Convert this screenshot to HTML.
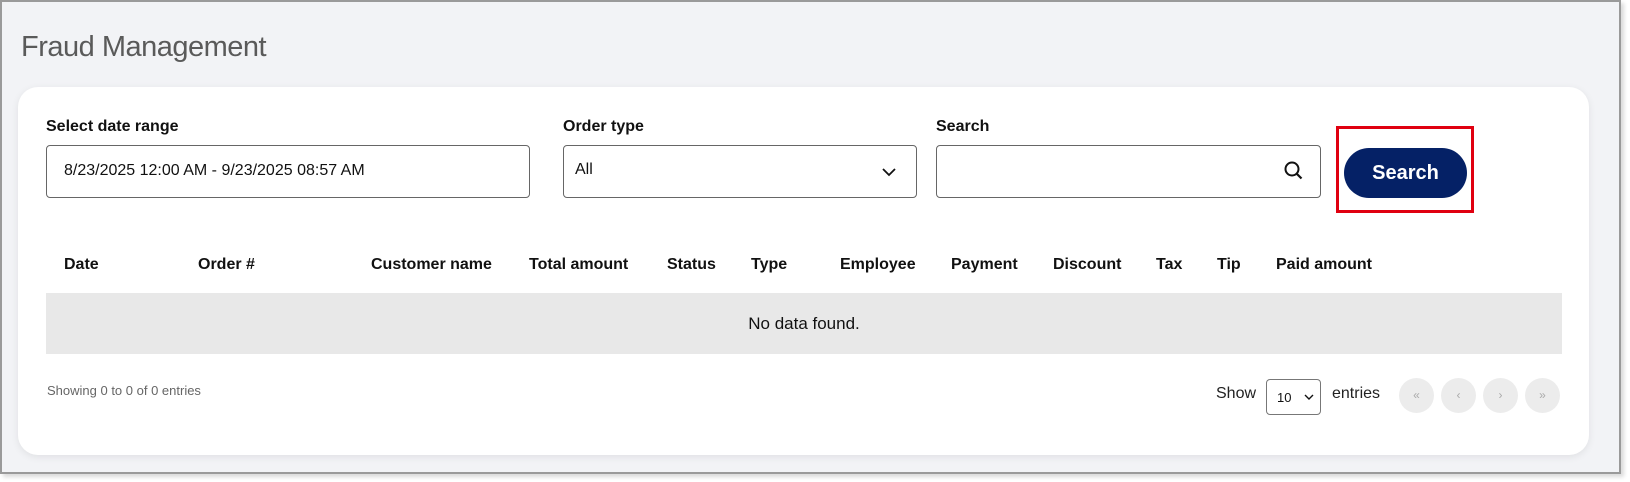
<!DOCTYPE html>
<html><head><meta charset="utf-8"><style>
*{box-sizing:border-box;margin:0;padding:0}
body{width:1630px;height:482px;background:#fff;font-family:"Liberation Sans",Arial,sans-serif;position:relative;overflow:hidden}
.frame{position:absolute;left:0;top:0;width:1621px;height:474px;border:2px solid #9a9a9a;background:#f2f3f6;box-shadow:3px 3px 4px rgba(0,0,0,.15)}
.abs{position:absolute}
.title{left:21px;top:31px;font-size:29px;color:#5a5a5a;letter-spacing:-0.5px}
.card{left:18px;top:87px;width:1571px;height:368px;background:#fff;border-radius:20px;box-shadow:0 2px 8px rgba(0,0,0,.08)}
.lbl{font-size:16px;font-weight:bold;color:#111}
.inp{border:1px solid #666;border-radius:4px;height:53px;top:145px;background:#fff}
.th{top:256px;font-size:16px;font-weight:bold;color:#111}
.pg{width:35px;height:35px;border-radius:50%;background:#ececec;color:#aaa;font-size:12px;text-align:center;line-height:35px;top:378px}
</style></head><body>
<div class="frame"></div>
<div class="abs title">Fraud Management</div>
<div class="abs card"></div>
<div class="abs lbl" style="left:46px;top:118px">Select date range</div>
<div class="abs lbl" style="left:563px;top:118px">Order type</div>
<div class="abs lbl" style="left:936px;top:118px">Search</div>
<div class="abs inp" style="left:46px;width:484px"></div>
<div class="abs" style="left:64px;top:162px;font-size:16px;color:#111">8/23/2025 12:00 AM - 9/23/2025 08:57 AM</div>
<div class="abs inp" style="left:563px;width:354px"></div>
<div class="abs" style="left:575px;top:161px;font-size:16px;color:#111">All</div>
<svg class="abs" style="left:881px;top:166px" width="16" height="12" viewBox="0 0 16 12"><path d="M2 3l6 6 6-6" fill="none" stroke="#111" stroke-width="1.8"/></svg>
<div class="abs inp" style="left:936px;width:385px"></div>
<svg class="abs" style="left:1283px;top:160px" width="22" height="22" viewBox="0 0 22 22"><circle cx="9" cy="9" r="6.5" fill="none" stroke="#111" stroke-width="2"/><path d="M13.5 13.5l5 5" stroke="#111" stroke-width="2.2"/></svg>
<div class="abs" style="left:1336px;top:126px;width:138px;height:87px;border:3px solid #e00010"></div>
<div class="abs" style="left:1344px;top:148px;width:123px;height:50px;border-radius:25px;background:#052166;color:#fff;font-weight:bold;font-size:20px;text-align:center;line-height:50px">Search</div>
<div class="abs th" style="left:64px">Date</div>
<div class="abs th" style="left:198px">Order #</div>
<div class="abs th" style="left:371px">Customer name</div>
<div class="abs th" style="left:529px">Total amount</div>
<div class="abs th" style="left:667px">Status</div>
<div class="abs th" style="left:751px">Type</div>
<div class="abs th" style="left:840px">Employee</div>
<div class="abs th" style="left:951px">Payment</div>
<div class="abs th" style="left:1053px">Discount</div>
<div class="abs th" style="left:1156px">Tax</div>
<div class="abs th" style="left:1217px">Tip</div>
<div class="abs th" style="left:1276px">Paid amount</div>
<div class="abs" style="left:46px;top:293px;width:1516px;height:61px;background:#e8e8e8;text-align:center;line-height:61px;font-size:17px;color:#111">No data found.</div>
<div class="abs" style="left:47px;top:383px;font-size:13px;color:#666">Showing 0 to 0 of 0 entries</div>
<div class="abs" style="left:1216px;top:385px;font-size:16px;color:#222">Show</div>
<div class="abs" style="left:1266px;top:379px;width:55px;height:36px;border:1px solid #777;border-radius:4px;background:#fff"></div>
<div class="abs" style="left:1277px;top:390px;font-size:13px;color:#111">10</div>
<svg class="abs" style="left:1304px;top:393px" width="10" height="8" viewBox="0 0 10 8"><path d="M1 2l4 4 4-4" fill="none" stroke="#111" stroke-width="1.4"/></svg>
<div class="abs" style="left:1332px;top:385px;font-size:16px;color:#222">entries</div>
<div class="abs pg" style="left:1399px">«</div>
<div class="abs pg" style="left:1441px">‹</div>
<div class="abs pg" style="left:1483px">›</div>
<div class="abs pg" style="left:1525px">»</div>
</body></html>
